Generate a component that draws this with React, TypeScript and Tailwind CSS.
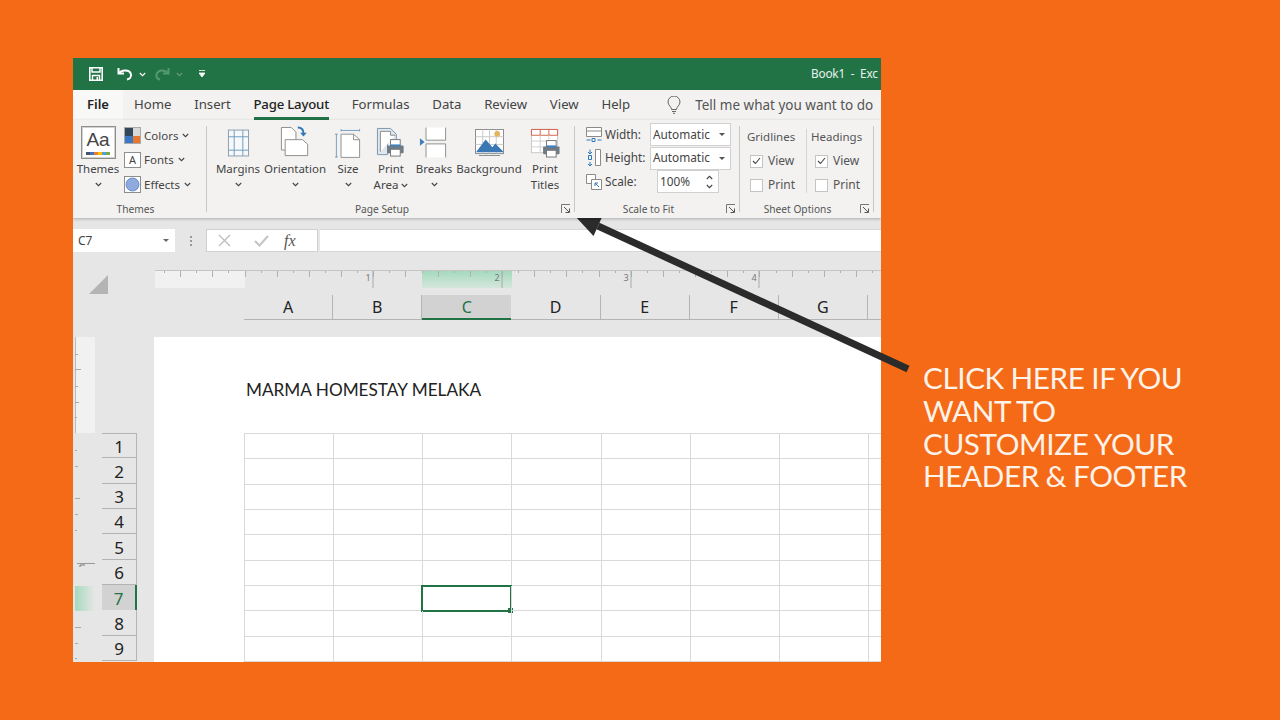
import { ReactNode } from "react";

const tabs = ["Home", "Insert", "Page Layout", "Formulas", "Data", "Review", "View", "Help"];
const columns = ["A", "B", "C", "D", "E", "F", "G", ""];
const rows = [1, 2, 3, 4, 5, 6, 7, 8, 9];

function Chevron({ className = "" }: { className?: string }) {
  return (
    <svg width="7" height="5" viewBox="0 0 7 5" className={`shrink-0 ${className}`}>
      <path d="M.8 1l2.7 2.7L6.2 1" fill="none" stroke="#444" strokeWidth="1.1" />
    </svg>
  );
}

function Launcher() {
  return (
    <svg width="10" height="10" viewBox="0 0 10 10" className="shrink-0">
      <path d="M.5 9V.5H9" fill="none" stroke="#777" />
      <path d="M3 3l5 5M8.500 4.500V8.500H4.500" fill="none" stroke="#555" />
    </svg>
  );
}

function Printer({ x, y }: { x: number; y: number }) {
  return (
    <g transform={`translate(${x} ${y})`}>
      <rect x="4" y="0" width="10" height="7" fill="#fff" stroke="#777" />
      <rect x="0.500" y="6" width="17" height="8" rx="1" fill="#6e7a84" />
      <rect x="4" y="5" width="10" height="2" fill="#3f7fbf" />
      <rect x="4" y="10" width="10" height="7" fill="#fff" stroke="#777" />
    </g>
  );
}

function MarginsIcon() {
  return (
    <svg width="23" height="30" viewBox="0 0 24 30">
      <rect x="1.500" y="1.500" width="21" height="27" fill="#f6f8fa" stroke="#8a9ba8" />
      <path d="M7.500 1.500v27M16.500 1.500v27M1.500 8.500h21M1.500 22.500h21" stroke="#6d9cc0" fill="none" />
    </svg>
  );
}

function OrientationIcon() {
  return (
    <svg width="30" height="32" viewBox="0 0 32 34">
      <path d="M1.500 25.500V1.500H12l5 5V25.500z" fill="#fff" stroke="#8a8a8a" />
      <path d="M5.500 31.500V14.500H24l5.500 5V31.500z" fill="#fff" stroke="#8a8a8a" />
      <path d="M19 1.500c4 0 6 2 6 6" fill="none" stroke="#2f78b7" strokeWidth="2" />
      <path d="M21.500 7h7l-3.500 4z" fill="#2f78b7" />
    </svg>
  );
}

function SizeIcon() {
  return (
    <svg width="26" height="30" viewBox="0 0 28 32">
      <path d="M6.500 1v2.500M26.500 1v2.500M6.500 2.500h20M1.500 6.500v25M0 6.500h3M0 31h3" stroke="#6f9cc2" fill="none" />
      <path d="M6.500 31.500V6.500H20l6.500 6V31.500z" fill="#fff" stroke="#8a8a8a" />
      <path d="M20 6.500v6h6.500" fill="none" stroke="#8a8a8a" />
    </svg>
  );
}

function PrintAreaIcon() {
  return (
    <svg width="31" height="31" viewBox="0 0 32 32">
      <path d="M1.500 28.500V1.500H15l6 6V14H12v14.500z" fill="#dfe7ee" stroke="#7d97ad" />
      <path d="M4.500 25.500V4.500H15v4h5" fill="#fff" stroke="#8a8a8a" />
      <Printer x={11} y={13} />
    </svg>
  );
}

function BreaksIcon() {
  return (
    <svg width="28" height="31" viewBox="0 0 30 32" className="-ml-[3px]">
      <path d="M7.500 0v13.500H28.500V0" fill="#fff" stroke="#8a8a8a" />
      <path d="M7.500 32V17.500H28.500V32" fill="#fff" stroke="#8a8a8a" />
      <path d="M1 11.500l5 4-5 4z" fill="#3f7fbf" />
    </svg>
  );
}

function BackgroundIcon() {
  return (
    <svg width="29" height="27" viewBox="0 0 30 28" className="mb-[2px]">
      <rect x=".5" y=".5" width="29" height="25" fill="#fff" stroke="#8a8a8a" />
      <path d="M.5 8h29M.5 16h29M8 .5v25M15 .5v25M22 .5v25" stroke="#c8c8c8" />
      <circle cx="23" cy="5" r="3" fill="#e6b45c" />
      <path d="M1 24l10-13 7 8 3-4 8 8v1z" fill="#3a78b5" />
      <path d="M4 27.500h22" stroke="#888" />
    </svg>
  );
}

function PrintTitlesIcon() {
  return (
    <svg width="31" height="30" viewBox="0 0 32 31">
      <rect x="1.500" y="1.500" width="27" height="24" fill="#fff" stroke="#c9c9c9" />
      <path d="M1.500 1.500h27M1.500 7.500h27M10.500 1.500v6M19.500 1.500v6M1.500 1.500v6M28.500 1.500v6" stroke="#d5604a" fill="none" />
      <path d="M1.500 13.500h27M1.500 19.500h27M10.500 7.500v18M19.500 7.500v18" stroke="#d0d0d0" />
      <Printer x={13} y={13} />
    </svg>
  );
}

function RibbonButton({ width, icon, label, chevron }: { width: string; icon: ReactNode; label: ReactNode; chevron?: boolean }) {
  return (
    <div className={`flex flex-col items-center ${width}`}>
      <div className="flex h-[36px] items-end justify-center pb-[3px]">{icon}</div>
      <div className="whitespace-nowrap text-center text-[11.500px] leading-[16px] text-[#444]">{label}</div>
      {chevron && <Chevron className="mt-[5px]" />}
    </div>
  );
}

function Group({ label, width, labelClass, launcher, children }: { label: string; width: string; labelClass: string; launcher?: boolean; children: ReactNode }) {
  return (
    <div className={`flex shrink-0 flex-col ${width}`}>
      <div className="flex-1">{children}</div>
      <div className="flex h-[20px] items-center pr-[3px] pt-[2px]">
        <div className={`flex-1 text-center text-[10.200px] leading-[14px] text-[#555] ${labelClass}`}>{label}</div>
        {launcher && <Launcher />}
      </div>
    </div>
  );
}

function Separator({ className = "" }: { className?: string }) {
  return <div className={`mb-[6px] mt-[1px] w-px shrink-0 self-stretch bg-[#c8c8c8] ${className}`} />;
}

function StyleRow({ icon, label }: { icon: ReactNode; label: string }) {
  return (
    <div className="flex h-[24.500px] items-center gap-[3px] text-[11.500px] text-[#444]">
      {icon}
      <span>{label}</span>
      <Chevron className="ml-[1px]" />
    </div>
  );
}

function ScaleRow({ icon, label, children }: { icon: ReactNode; label: string; children: ReactNode }) {
  return (
    <div className="flex h-[23.500px] items-center">
      <div className="flex w-[19px] justify-start">{icon}</div>
      <span className="w-[45px] text-[11.800px] text-[#444]">{label}</span>
      {children}
    </div>
  );
}

function AutoSelect() {
  return (
    <div className="flex h-[23px] w-[81px] items-center justify-between border border-[#d0d0d0] bg-white pl-[2px] pr-[5px] text-[11.800px] text-[#444]">
      <span>Automatic</span>
      <span className="h-0 w-0 border-x-[3px] border-t-[3px] border-x-transparent border-t-[#555]" />
    </div>
  );
}

function Check({ label, checked }: { label: string; checked?: boolean }) {
  return (
    <div className="flex h-[24px] items-center gap-[5px] pl-[4px] text-[12px] text-[#555]">
      <div className="flex h-[13px] w-[13px] items-center justify-center border border-[#c4c4c4] bg-white">
        {checked && (
          <svg width="9" height="8" viewBox="0 0 9 8">
            <path d="M1 4l2.500 2.500L8 1" fill="none" stroke="#444" strokeWidth="1.100" />
          </svg>
        )}
      </div>
      <span>{label}</span>
    </div>
  );
}

function Ruler() {
  const ticks = [];
  for (let k = 0; k < 46; k++) {
    const x = Math.round(9.11 + k * 16.09) + 0.5;
    ticks.push(<path key={k} d={`M${x} 0v${(k - 21) % 2 === 0 ? 6 : 2}`} stroke="#b0b0b0" />);
  }
  return (
    <div className="relative flex h-[18px] w-[726px] shrink-0 border-t border-[#c4c4c4]">
      <div className="h-full w-[90px] bg-[#f1f1f1]" />
      <div className="ml-[177px] h-full w-[90px] bg-gradient-to-b from-[#a4dabd] to-[#d5e6dc]" />
      <svg className="absolute left-0 top-0" width="726" height="18" viewBox="0 0 726 18">
        {ticks}
        {[
          [218, "1"],
          [347, "2"],
          [476, "3"],
          [604, "4"],
        ].map(([x, n]) => (
          <g key={n}>
            <path d={`M${x} 0v17`} stroke="#aaa" />
            <text x={Number(x) - 5} y="10" fontSize="9" fill="#777" textAnchor="middle">{n}</text>
          </g>
        ))}
      </svg>
    </div>
  );
}

function SideRuler() {
  const marks = [
    [17, 3],
    [32, 6],
    [49, 3],
    [65, 4],
    [80, 2],
    [113, 2],
    [129, 3],
    [161, 5],
    [177, 3],
    [193, 2],
    [290, 6],
    [306, 3],
    [321, 2],
  ];
  return (
    <div className="relative flex w-[20px] flex-col">
      <div className="h-[96px] bg-[#f1f1f1]" />
      <div className="mt-[153px] h-[25px] w-full bg-gradient-to-r from-[#a4dabd] to-[#e6e6e6]" />
      <svg className="absolute left-0 top-0" width="20" height="325" viewBox="0 0 20 325">
        <path d="M.5 0v96" stroke="#bbb" />
        {marks.map(([y, w]) => (
          <path key={y} d={`M0 ${y + 0.5}h${w}`} stroke="#aaa" />
        ))}
        <path d="M2 226.500h18" stroke="#999" />
        <path d="M5 228h5M5 228v2" stroke="#777" />
      </svg>
    </div>
  );
}

export default function App() {
  return (
    <div className="relative flex h-[720px] w-[1280px] items-start overflow-hidden bg-[#f56a16] pl-[73px] pt-[58px] font-['Noto_Sans',sans-serif]">
      <div className="flex h-[604px] w-[808px] shrink-0 flex-col overflow-hidden bg-[#e6e6e6]">
        {/* title bar */}
        <div className="flex h-[32px] shrink-0 items-center bg-[#217346] pl-[16px]">
          <svg className="shrink-0" width="14" height="14" viewBox="0 0 14 14">
            <path d="M.8.800H13.200V13.200H.8z" fill="none" stroke="#fff" strokeWidth="1.600" />
            <path d="M3 1v4h8V1M3.500 13V8.500h7V13" fill="none" stroke="#fff" strokeWidth="1.400" />
            <path d="M7.500 10h1.500v3H7.500z" fill="#fff" />
          </svg>
          <svg className="ml-[14px] shrink-0" width="16" height="14" viewBox="0 0 16 14">
            <path d="M1.500 1v5.500H7" fill="none" stroke="#fff" strokeWidth="2" />
            <path d="M2 6.500C4 2.500 13 2 14 7.500c.4 2.500-1.500 4.500-4 5" fill="none" stroke="#fff" strokeWidth="2" />
          </svg>
          <Chevron className="ml-[6px] [&>path]:stroke-white" />
          <svg className="ml-[9px] shrink-0 opacity-40" width="15" height="14" viewBox="0 0 15 14">
            <path d="M13.500 1v5.500H8" fill="none" stroke="#9fd0b5" strokeWidth="2" />
            <path d="M13 6.500C11 2.500 3 2 1.500 7.500c-.4 2.500 1 4.500 3.500 5" fill="none" stroke="#9fd0b5" strokeWidth="2" />
          </svg>
          <Chevron className="ml-[6px] opacity-30 [&>path]:stroke-white" />
          <svg className="ml-[16px] shrink-0" width="6" height="8" viewBox="0 0 6 8">
            <path d="M0 .5h6M0 3h6L3 7z" stroke="#fff" fill="#fff" strokeWidth=".8" />
          </svg>
          <span className="ml-[606px] shrink-0 whitespace-pre text-[11.800px] tracking-[-0.2px] text-[#e8f2ec]">Book1  -  Exc</span>
        </div>

        {/* tabs */}
        <div className="flex h-[30px] shrink-0 items-stretch whitespace-nowrap bg-[#f3f2f1] text-[13.200px] text-[#444]">
          <div className="flex w-[50px] items-center justify-center bg-[#f8f8f7] text-[13px] font-semibold text-[#222]">File</div>
          <div className="ml-[11px] flex gap-[22.700px]">
            {tabs.map((tab) => (
              <div
                key={tab}
                className={
                  tab === "Page Layout"
                    ? "flex items-center border-b-[3px] border-[#217346] pt-[3px] font-medium tracking-[-0.2px] text-[#222]"
                    : "flex items-center"
                }
              >
                {tab}
              </div>
            ))}
          </div>
          <svg className="ml-[37px] shrink-0 self-center" width="14" height="18" viewBox="0 0 14 18">
            <path d="M4.500 13.500c0-3-3.500-4-3.500-7.500a6 6 0 0 1 12 0c0 3.500-3.500 4.500-3.500 7.500zM5 15.500h4M6 17.300h2" fill="none" stroke="#666" />
          </svg>
          <div className="ml-[14px] flex items-center text-[13.500px] text-[#555]">Tell me what you want to do</div>
        </div>

        {/* ribbon */}
        <div className="relative z-10 flex h-[98px] shrink-0 bg-[#f3f2f1] pt-[5px] shadow-[0_1px_3px_rgba(0,0,0,0.25)]">
          <Group label="Themes" width="w-[133px]" labelClass="pr-[5px]">
            <div className="flex">
              <div className="ml-[2px] flex w-[46px] flex-col items-center">
                <div className="mt-[1px] flex h-[33px] w-[35px] flex-col items-center justify-between border border-[#8e8e8e] bg-[#d2d2d2] p-[1px]">
                  <div className="flex h-full w-full flex-col items-center justify-between bg-white pb-[2px]">
                    <span className="font-['Liberation_Sans',sans-serif] text-[19px] leading-[24px] text-[#444]">Aa</span>
                    <svg width="24" height="3" viewBox="0 0 24 3">
                      <path d="M0 0h4v3H0z" fill="#44546a" />
                      <path d="M4 0h4v3H4z" fill="#4472c4" />
                      <path d="M8 0h4v3H8z" fill="#ed7d31" />
                      <path d="M12 0h4v3h-4z" fill="#ffc000" />
                      <path d="M16 0h4v3h-4z" fill="#5b9bd5" />
                      <path d="M20 0h4v3h-4z" fill="#70ad47" />
                    </svg>
                  </div>
                </div>
                <div className="mt-[2px] text-[11.500px] leading-[16px] text-[#444]">Themes</div>
                <Chevron className="mt-[5px]" />
              </div>
              <div className="-mt-[2px] ml-[3px]">
                <StyleRow
                  label="Colors"
                  icon={
                    <svg width="17" height="17" viewBox="0 0 17 17">
                      <rect x=".5" y=".5" width="16" height="16" fill="#fff" stroke="#aaa" />
                      <path d="M1 1h8v8H1z" fill="#34465a" />
                      <path d="M9 1h7v8H9z" fill="#d8d8d8" />
                      <path d="M1 9h8v7H1z" fill="#3a78c5" />
                      <path d="M9 9h7v7H9z" fill="#e8762c" />
                    </svg>
                  }
                />
                <StyleRow
                  label="Fonts"
                  icon={
                    <div className="flex h-[16px] w-[17px] items-center justify-center border border-[#8e8e8e] bg-white text-[11px] leading-none text-[#444]">A</div>
                  }
                />
                <StyleRow
                  label="Effects"
                  icon={
                    <svg width="17" height="17" viewBox="0 0 17 17">
                      <rect x=".5" y=".5" width="16" height="16" fill="#fff" stroke="#8e8e8e" />
                      <circle cx="8.500" cy="8.500" r="6.500" fill="#8faadc" stroke="#4472c4" strokeWidth=".7" />
                    </svg>
                  }
                />
              </div>
            </div>
          </Group>
          <Separator />
          <Group label="Page Setup" width="w-[367px]" labelClass="pr-[4px]" launcher>
            <div className="flex pl-[8px]">
              <RibbonButton width="w-[46px]" icon={<MarginsIcon />} label="Margins" chevron />
              <RibbonButton width="w-[68px]" icon={<OrientationIcon />} label="Orientation" chevron />
              <RibbonButton width="w-[38px]" icon={<SizeIcon />} label="Size" chevron />
              <RibbonButton
                width="w-[48px]"
                icon={<PrintAreaIcon />}
                label={
                  <>
                    Print
                    <br />
                    <span className="inline-flex items-center gap-[3px]">
                      Area <Chevron />
                    </span>
                  </>
                }
              />
              <RibbonButton width="w-[38px]" icon={<BreaksIcon />} label="Breaks" chevron />
              <RibbonButton width="w-[72px]" icon={<BackgroundIcon />} label="Background" />
              <RibbonButton
                width="w-[40px]"
                icon={<PrintTitlesIcon />}
                label={
                  <>
                    Print
                    <br />
                    Titles
                  </>
                }
              />
            </div>
          </Group>
          <Separator />
          <Group label="Scale to Fit" width="w-[164px]" labelClass="pr-[4px]" launcher>
            <div className="pl-[11px]">
              <div className="-mt-[2px]">
                <ScaleRow
                  label="Width:"
                  icon={
                    <svg width="16" height="16" viewBox="0 0 16 16">
                      <path d="M.5.500h15v9H.5zM.5 4h15" fill="#fff" stroke="#8a8a8a" />
                      <path d="M.5 13h4M11.500 13h4M6 11.500h3v3H6z" stroke="#2f78b7" fill="none" />
                    </svg>
                  }
                >
                  <AutoSelect />
                </ScaleRow>
                <ScaleRow
                  label="Height:"
                  icon={
                    <svg width="16" height="18" viewBox="0 0 16 18">
                      <path d="M9.500.500h5v16h-5z" fill="#fff" stroke="#8a8a8a" />
                      <path d="M4 .5v4M2 3l2 2 2-2M4 13v4M2 15l2 2 2-2M2.500 6.500h3v4h-3z" stroke="#2f78b7" fill="none" />
                    </svg>
                  }
                >
                  <AutoSelect />
                </ScaleRow>
                <ScaleRow
                  label="Scale:"
                  icon={
                    <svg width="16" height="16" viewBox="0 0 16 16">
                      <path d="M.5.500h9v9H.5z" fill="#fff" stroke="#8a8a8a" />
                      <path d="M5.500 5.500h10v10h-10z" fill="#fff" stroke="#8a8a8a" />
                      <path d="M13 13l-4-4M9 12V9h3" stroke="#2f78b7" fill="none" />
                    </svg>
                  }
                >
                  <div className="ml-[7px] flex h-[23px] w-[62px] items-center justify-between border border-[#d0d0d0] bg-white pl-[2px] pr-[5px] text-[11.800px] text-[#444]">
                    <span>100%</span>
                    <span className="flex flex-col gap-[4px]">
                      <Chevron className="rotate-180" />
                      <Chevron />
                    </span>
                  </div>
                </ScaleRow>
              </div>
            </div>
          </Group>
          <Separator />
          <Group label="Sheet Options" width="w-[133px]" labelClass="pr-[5px]" launcher>
            <div className="flex pl-[6px]">
              <div className="w-[60px]">
                <div className="h-[24px] pl-[1px] text-[11.500px] leading-[24px] text-[#555]">Gridlines</div>
                <Check label="View" checked />
                <Check label="Print" />
              </div>
              <div className="mb-[4px] mt-[4px] w-px self-stretch bg-[#d4d4d4]" />
              <div className="pl-[4px]">
                <div className="h-[24px] text-[11.500px] leading-[24px] text-[#555]">Headings</div>
                <Check label="View" checked />
                <Check label="Print" />
              </div>
            </div>
          </Group>
          <Separator />
        </div>

        {/* formula bar */}
        <div className="mt-[11px] flex h-[23px] shrink-0 items-stretch">
          <div className="flex w-[102px] items-center justify-between bg-white pl-[5px] pr-[6px] text-[12px] text-[#444]">
            <span>C7</span>
            <span className="h-0 w-0 border-x-[3px] border-t-[3px] border-x-transparent border-t-[#666]" />
          </div>
          <div className="flex w-[31px] flex-col items-center justify-center gap-[2px]">
            <span className="h-[2px] w-[2px] bg-[#999]" />
            <span className="h-[2px] w-[2px] bg-[#999]" />
            <span className="h-[2px] w-[2px] bg-[#999]" />
          </div>
          <div className="flex w-[112px] items-center border border-[#d0d0d0] bg-white pl-[11px] font-['Liberation_Serif',serif]">
            <svg width="13" height="13" viewBox="0 0 13 13">
              <path d="M1 1l11 11M12 1L1 12" stroke="#bbb" strokeWidth="1.200" />
            </svg>
            <svg className="ml-[23px]" width="15" height="12" viewBox="0 0 15 12">
              <path d="M1 6l4.500 4.500L14 1" fill="none" stroke="#c4c4c4" strokeWidth="2" />
            </svg>
            <span className="ml-[15px] text-[16px] italic text-[#555]">fx</span>
          </div>
          <div className="ml-[2px] flex-1 border-y border-[#d6d6d6] bg-white" />
        </div>

        {/* ruler and column headers */}
        <div className="relative ml-[82px] mt-[18px]">
          <Ruler />
          <div className="mt-[7px] flex h-[25px] pl-[89px]">
            {columns.map((col) => (
              <div
                key={col}
                className={
                  col === "C"
                    ? "flex w-[89.150px] shrink-0 items-center justify-center border-b-2 border-[#217346] bg-[#d2d2d2] text-[16px] text-[#217346]"
                    : "flex w-[89.150px] shrink-0 items-center justify-center border-b border-r border-[#b4b4b4] text-[16px] text-[#222]"
                }
              >
                {col}
              </div>
            ))}
          </div>
        </div>

        {/* sheet area */}
        <div className="relative mt-[17px] flex min-h-0 flex-1 items-stretch">
          <div className="flex w-[81px] shrink-0 pl-[2px]">
            <SideRuler />
            <div className="ml-[7px] w-[35px] pt-[96px]">
              {rows.map((row) => (
                <div
                  key={row}
                  className={
                    row === 7
                      ? "flex h-[25.330px] items-center justify-center border-r-2 border-[#217346] bg-[#d2d2d2] pt-[2px] text-[17px] text-[#217346]"
                      : row === 1
                        ? "flex h-[25.330px] items-center justify-center border-y border-r border-[#b4b4b4] pt-[2px] text-[17px] text-[#222]"
                        : "flex h-[25.330px] items-center justify-center border-b border-r border-[#b4b4b4] pt-[2px] text-[17px] text-[#222]"
                  }
                >
                  {row}
                </div>
              ))}
            </div>
          </div>
          <div className="min-w-0 flex-1 overflow-hidden bg-white pl-[90px]">
            <div className="flex h-[96px] items-start pl-[2px] pt-[41px] font-['Lato',sans-serif] text-[17.200px] leading-[24px] text-[#222]">
              MARMA HOMESTAY MELAKA
            </div>
            <div className="w-[714px] border-t border-[#d9d9d9]">
              {rows.map((row) => (
                <div key={row} className="flex h-[25.330px]">
                  {columns.map((col, i) => (
                    <div key={i} className="relative w-[89.150px] shrink-0 border-b border-l border-[#d9d9d9]">
                      {row === 7 && col === "C" && (
                        <div className="absolute -left-[2px] -top-px h-[27px] w-[91px] border-2 border-[#217346]">
                          <div className="absolute -bottom-[3px] -right-[3px] h-[5px] w-[5px] bg-[#217346]" />
                        </div>
                      )}
                    </div>
                  ))}
                </div>
              ))}
            </div>
          </div>
        </div>
      </div>

      {/* select-all triangle sits in the gray gutter */}
      <svg className="absolute left-[89px] top-[275px]" width="19" height="19" viewBox="0 0 19 19">
        <path d="M19 0v19H0z" fill="#b4b4b4" />
      </svg>

      {/* callout text */}
      <div className="ml-[42px] mt-[304px] font-['Lato',sans-serif] text-[29.700px] font-normal leading-[32.800px] tracking-[-0.4px] text-[#fdf3ea] [word-spacing:-0.5px]">
        <div className="whitespace-nowrap">CLICK HERE IF YOU</div>
        <div className="whitespace-nowrap">WANT TO</div>
        <div className="whitespace-nowrap">CUSTOMIZE YOUR</div>
        <div className="whitespace-nowrap">HEADER &amp; FOOTER</div>
      </div>

      {/* arrow */}
      <svg className="pointer-events-none absolute inset-0" width="1280" height="720" viewBox="0 0 1280 720">
        <path d="M908 369L598 226" stroke="#2b2b2b" strokeWidth="7" />
        <path d="M575 216L602.500 216L593.500 236Z" fill="#2b2b2b" />
      </svg>
    </div>
  );
}
